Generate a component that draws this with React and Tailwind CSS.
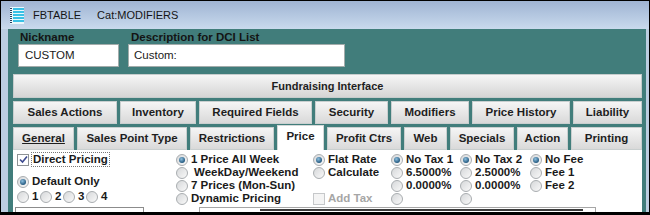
import React from 'react';

const FONT = { fontFamily: '"Liberation Sans", Arial, sans-serif' };

// row 1 buttons: [label, width]
const ROW1 = [
  ['Sales Actions', 'w-[104px]'],
  ['Inventory', 'w-[76px]'],
  ['Required Fields', 'w-[113px]'],
  ['Security', 'w-[73px]'],
  ['Modifiers', 'w-[78px]'],
  ['Price History', 'w-[98px]'],
  ['Liability', 'w-[69px]'],
];

const ROW2 = [
  ['General', 'w-[61px]'],
  ['Sales Point Type', 'w-[110px]'],
  ['Restrictions', 'w-[84px]'],
  ['Price', 'w-[47px]'],
  ['Profit Ctrs', 'w-[74px]'],
  ['Web', 'w-[43px]'],
  ['Specials', 'w-[64px]'],
  ['Action', 'w-[51px]'],
  ['Printing', 'w-[71px]'],
];

function Radio({ on }) {
  return (
    <span className="w-[12px] h-[12px] shrink-0 rounded-full border border-[#a9adb0] bg-linear-to-br from-[#d6d8da] to-[#f9f9f9] flex items-center justify-center">
      {on && <span className="w-[6px] h-[6px] rounded-full bg-[radial-gradient(circle_at_40%_35%,#8fc0e0,#245a80_70%)]" />}
    </span>
  );
}

function RadioRow({ on, label, className = '' }) {
  return (
    <div className="h-[13px] flex items-center gap-[3px]">
      <Radio on={on} />
      {label && <span className={`text-[11.5px] font-bold text-[#1a1a1a] leading-[13px] whitespace-nowrap ${className}`}>{label}</span>}
    </div>
  );
}

function TitleIcon() {
  return (
    <svg width="14" height="17" viewBox="0 0 14 17">
      <rect x="0" y="0" width="14" height="17" fill="#eaf8fc" />
      {[1, 4, 7, 10, 13].map((y) => (
        <rect key={y} x="3" y={y} width="11" height="2" fill="#39c1e6" />
      ))}
      {[1, 3, 5, 7, 9, 11, 13, 15].map((y) => (
        <rect key={'d' + y} x="0" y={y} width="2" height="1" fill="#2b3f60" />
      ))}
    </svg>
  );
}

export default function App() {
  return (
    <div style={FONT} className="w-[650px] h-[215px] overflow-hidden border-t border-x border-b-[3px] border-black flex flex-col bg-[#bccde0]">
      {/* title bar */}
      <div className="h-[28px] shrink-0 bg-linear-to-b from-[#9fb4d3] to-[#c9daed] flex items-center pl-[9px]">
        <TitleIcon />
        <span className="ml-[9px] text-[11px] text-[#151515]">FBTABLE</span>
        <span className="ml-[16px] text-[11px] text-[#151515]">Cat:MODIFIERS</span>
      </div>

      <div className="flex-1 flex">
        <div className="w-[7px] bg-[#bccde0]" />
        <div className="w-[638px] bg-[#417d7b] px-[5px] pr-[4px] pt-[1px] flex flex-col">
          {/* nickname + description */}
          <div className="flex pl-[5px] gap-[9px]">
            <div className="flex flex-col">
              <span className="h-[14px] leading-[14px] pl-[2px] text-[11.5px] font-bold text-[#141414]">Nickname</span>
              <div className="w-[101px] h-[23px] bg-white border border-[#a3acab] flex items-center pl-[6px] text-[11.5px] text-[#1a1a1a]">CUSTOM</div>
            </div>
            <div className="flex flex-col">
              <span className="h-[14px] leading-[14px] pl-[3px] text-[11.5px] font-bold text-[#141414]">Description for DCI List</span>
              <div className="w-[217px] h-[23px] bg-white border border-[#a3acab] flex items-center pl-[5px] text-[11.5px] text-[#1a1a1a]">Custom:</div>
            </div>
          </div>

          {/* fundraising bar */}
          <div className="mt-[7px] h-[24px] bg-linear-to-b from-[#f6f6f6] to-[#d5d5d5] border border-[#c6cccc] flex items-center justify-center text-[11px] font-bold text-[#1e1e1e]">
            Fundraising Interface
          </div>

          {/* button row 1 */}
          <div className="mt-[3px] flex gap-[3px]">
            {ROW1.map(([label, w]) => (
              <div key={label} className={`${w} h-[23px] bg-linear-to-b from-[#f5f5f5] to-[#d9d9d9] border border-[#c9cfcf] flex items-center justify-center text-[11.5px] font-bold text-[#1e1e1e] whitespace-nowrap`}>
                {label}
              </div>
            ))}
          </div>

          {/* tab row 2 */}
          <div className="mt-[1px] h-[25px] flex items-end gap-[3px]">
            {ROW2.map(([label, w]) => {
              const sel = label === 'Price';
              return (
                <div
                  key={label}
                  className={`${w} ${sel ? 'h-[25px] bg-white border border-b-0 border-[#d4d8d8] pb-[3px]' : 'h-[23px] bg-linear-to-b from-[#f5f5f5] to-[#d9d9d9] border border-[#c9cfcf]'} flex items-center justify-center text-[11.5px] font-bold text-[#1e1e1e] whitespace-nowrap`}
                >
                  <span className={label === 'General' ? 'underline' : ''}>{label}</span>
                </div>
              );
            })}
          </div>

          {/* content panel */}
          <div className="h-[62px] bg-white overflow-hidden flex flex-col">
            <div className="h-[57px] shrink-0 flex pt-[3px] pl-[4px]">
              <div className="w-[159px] flex flex-col">
                <div className="h-[13px] flex items-center gap-[3px]">
                  <span className="w-[12px] h-[12px] border border-[#8e9396] bg-white flex items-center justify-center">
                    <svg width="9" height="9" viewBox="0 0 9 9">
                      <path d="M1 4.5 L3.5 7 L8 1.5" stroke="#3d4a8f" strokeWidth="1.6" fill="none" />
                    </svg>
                  </span>
                  <span className="text-[11.5px] font-bold text-[#1a1a1a] leading-[13px] outline outline-1 outline-dotted outline-[#777] px-[1px]">Direct Pricing</span>
                </div>
                <div className="mt-[9px]">
                  <RadioRow on label="Default Only" />
                </div>
                <div className="mt-[2px] h-[13px] flex items-center">
                  {['1', '2', '3', '4'].map((n) => (
                    <div key={n} className="flex items-center gap-[3px] w-[23px]">
                      <Radio />
                      <span className="text-[11.5px] font-bold text-[#1a1a1a]">{n}</span>
                    </div>
                  ))}
                </div>
              </div>

              <div className="w-[137px] flex flex-col">
                <RadioRow on label="1 Price All Week" />
                <RadioRow label="WeekDay/Weekend" className="pl-[3px]" />
                <RadioRow label="7 Prices (Mon-Sun)" />
                <RadioRow label="Dynamic Pricing" />
              </div>

              <div className="w-[78px] flex flex-col">
                <RadioRow on label="Flat Rate" />
                <RadioRow label="Calculate" />
                <div className="h-[13px]" />
                <div className="h-[13px] flex items-center gap-[3px]">
                  <span className="w-[12px] h-[12px] border border-[#c6c8ca] bg-[#f4f4f4]" />
                  <span className="text-[11.5px] font-bold text-[#a6a6a6]">Add Tax</span>
                </div>
              </div>

              <div className="w-[69px] flex flex-col">
                <RadioRow on label="No Tax 1" />
                <RadioRow label="6.5000%" />
                <RadioRow label="0.0000%" />
                <RadioRow />
              </div>

              <div className="w-[70px] flex flex-col">
                <RadioRow on label="No Tax 2" />
                <RadioRow label="2.5000%" />
                <RadioRow label="0.0000%" />
                <RadioRow />
              </div>

              <div className="flex-1 flex flex-col">
                <RadioRow on label="No Fee" />
                <RadioRow label="Fee 1" />
                <RadioRow label="Fee 2" />
              </div>
            </div>

            {/* boxes cut off at the bottom */}
            <div className="flex">
              <div className="ml-[2px] w-[129px] h-[10px] border border-[#8c8c8c]" />
              <div className="ml-[55px] w-[397px] h-[10px] border border-[#a6a6a6] pl-[60px] pt-[1px]">
                <div className="w-[323px] h-[10px] border-t-2 border-[#3a3a3a]" />
              </div>
            </div>
          </div>
        </div>
        <div className="flex-1 bg-[#bccde0]" />
      </div>
    </div>
  );
}
